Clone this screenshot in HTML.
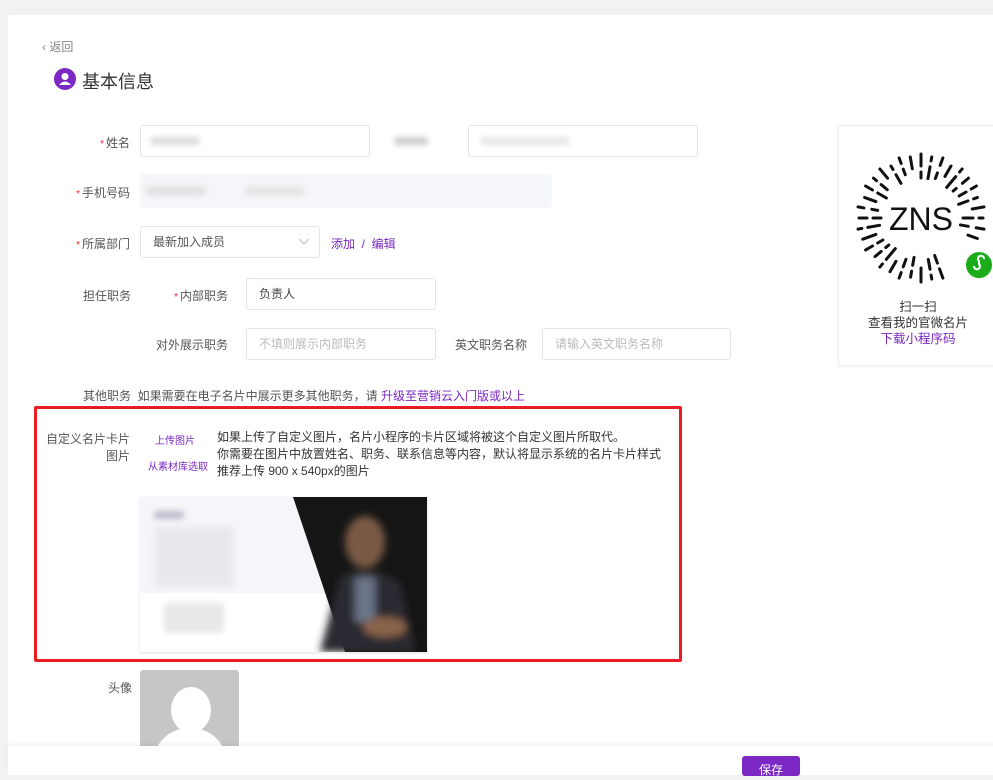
<!DOCTYPE html>
<html><head><meta charset="utf-8"><style>
*{margin:0;padding:0;box-sizing:border-box}
body{width:993px;height:768px;overflow:hidden;background:#f2f2f2;font-family:"Liberation Sans","Noto Sans CJK SC",sans-serif;font-size:12px;color:#333;position:relative}
.card{position:absolute;left:8px;top:15px;width:990px;height:760px;background:#fff;border-radius:3px}
.a{position:absolute;white-space:nowrap}
.lbl{position:absolute;text-align:right;color:#555;font-size:12px;white-space:nowrap}
.req{color:#f5222d;font-size:10px;margin-right:2px}
.inp{position:absolute;border:1px solid #e2e2e8;border-radius:3px;background:#fff;height:32px;line-height:30px;padding-left:12px;font-size:12px;color:#444}
.ph{color:#bbb}
.p{color:#7b28c4}
.blur{position:absolute;background:#ddd;filter:blur(3px);border-radius:3px}
</style></head><body>
<div class="card"></div>
<div class="a" style="left:42px;top:38px;color:#888;font-size:12px">‹ 返回</div>
<div class="a" style="left:54px;top:68px;width:22px;height:22px;border-radius:50%;background:#7b28c4"></div>
<svg class="a" style="left:54px;top:68px" width="22" height="22"><circle cx="11" cy="8.5" r="3.5" fill="#fff"/><path d="M5 17 Q11 10 17 17 Z" fill="#fff"/></svg>
<div class="a" style="left:82px;top:68px;font-size:18px;color:#333">基本信息</div>

<div class="lbl" style="left:60px;width:70px;top:134px"><span class="req">*</span>姓名</div>
<div class="inp" style="left:140px;top:125px;width:230px"></div>
<div class="blur" style="left:150px;top:137px;width:50px;height:8px"></div>
<div class="blur" style="left:394px;top:137px;width:34px;height:8px;background:#ccc"></div>
<div class="inp" style="left:468px;top:125px;width:230px"></div>
<div class="blur" style="left:480px;top:137px;width:90px;height:8px;background:#e6e6e6"></div>

<div class="lbl" style="left:60px;width:70px;top:184px"><span class="req">*</span>手机号码</div>
<div class="a" style="left:140px;top:174px;width:412px;height:34px;background:#f5f6f9;border-radius:3px;filter:blur(1px)"></div>
<div class="blur" style="left:146px;top:187px;width:60px;height:8px"></div>
<div class="blur" style="left:245px;top:187px;width:60px;height:8px;background:#e3e3e3"></div>

<div class="lbl" style="left:60px;width:70px;top:235px"><span class="req">*</span>所属部门</div>
<div class="inp" style="left:140px;top:226px;width:180px;color:#555">最新加入成员</div>
<svg class="a" style="left:298px;top:238px" width="12" height="8"><path d="M1 1 L6 6 L11 1" fill="none" stroke="#bbb"/></svg>
<div class="a p" style="left:331px;top:235px">添加 &nbsp;/ &nbsp;编辑</div>

<div class="a" style="left:83px;top:287px;color:#555">担任职务</div>
<div class="lbl" style="left:160px;width:68px;top:287px"><span class="req">*</span>内部职务</div>
<div class="inp" style="left:246px;top:278px;width:190px">负责人</div>
<div class="lbl" style="left:150px;width:78px;top:336px">对外展示职务</div>
<div class="inp ph" style="left:246px;top:328px;width:190px">不填则展示内部职务</div>
<div class="a" style="left:455px;top:336px;color:#555">英文职务名称</div>
<div class="inp ph" style="left:542px;top:328px;width:189px">请输入英文职务名称</div>

<div class="a" style="left:83px;top:387px;color:#555">其他职务 &nbsp;如果需要在电子名片中展示更多其他职务，请 <span class="p">升级至营销云入门版或以上</span></div>

<div class="a" style="left:34px;top:406px;width:648px;height:256px;border:3px solid #ec1c24;border-radius:2px"></div>
<div class="lbl" style="left:40px;width:90px;top:431px;line-height:17px">自定义名片卡片<br>图片</div>
<div class="a p" style="left:155px;top:432px;font-size:10px">上传图片</div>
<div class="a p" style="left:148px;top:458px;font-size:10px">从素材库选取</div>
<div class="a" style="left:217px;top:429px;line-height:17px;color:#333">如果上传了自定义图片，名片小程序的卡片区域将被这个自定义图片所取代。<br>你需要在图片中放置姓名、职务、联系信息等内容，默认将显示系统的名片卡片样式<br>推荐上传 900 x 540px的图片</div>

<div class="a" style="left:140px;top:497px;width:287px;height:155px;background:#fff;box-shadow:0 1px 3px rgba(0,0,0,.12);overflow:hidden">
 <div class="a" style="left:0;top:0;width:287px;height:96px;background:#f5f6f9"></div>
 <div class="blur" style="left:14px;top:14px;width:30px;height:8px;background:#bbc"></div>
 <div class="blur" style="left:14px;top:30px;width:80px;height:60px;background:#e8e9ee"></div>
 <div class="blur" style="left:24px;top:106px;width:60px;height:30px;background:#e8e8e8"></div>
 <svg class="a" style="left:0;top:0" width="287" height="155"><defs><filter id="b"><feGaussianBlur stdDeviation="4"/></filter></defs><polygon points="153,0 287,0 287,155 205,155" fill="#151515"/><g filter="url(#b)"><ellipse cx="225" cy="45" rx="20" ry="26" fill="#7a5a45"/><path d="M180 155 L200 80 Q225 65 260 85 L275 155Z" fill="#2a2c33"/><rect x="215" y="80" width="20" height="45" fill="#6a7488"/><ellipse cx="245" cy="130" rx="22" ry="10" fill="#8a6448"/></g></svg>
</div>

<div class="a" style="left:108px;top:679px;color:#555">头像</div>
<div class="a" style="left:140px;top:670px;width:99px;height:80px;background:#c6c6c6;border-radius:3px;overflow:hidden">
 <div class="a" style="left:31px;top:17px;width:40px;height:46px;border-radius:50%;background:#fff"></div>
 <div class="a" style="left:15px;top:58px;width:70px;height:60px;border-radius:50%;background:#fff"></div>
</div>

<div class="a" style="left:838px;top:125px;width:160px;height:241px;background:#fff;border:1px solid #eee;border-radius:3px;box-shadow:0 1px 3px rgba(0,0,0,.05)"></div>
<svg class="a" style="left:855px;top:148px" width="138" height="145">
<g stroke="#111" stroke-width="3" stroke-linecap="round">
<g transform="rotate(0 66 70)"><line x1="66" y1="6" x2="66" y2="18"/><line x1="66" y1="24" x2="66" y2="30"/></g>
<g transform="rotate(10 66 70)"><line x1="66" y1="8" x2="66" y2="12"/><line x1="66" y1="18" x2="66" y2="30"/></g>
<g transform="rotate(20 66 70)"><line x1="66" y1="6" x2="66" y2="14"/><line x1="66" y1="22" x2="66" y2="28"/></g>
<g transform="rotate(30 66 70)"><line x1="66" y1="10" x2="66" y2="22"/></g>
<g transform="rotate(40 66 70)"><line x1="66" y1="6" x2="66" y2="10"/><line x1="66" y1="16" x2="66" y2="30"/></g>
<g transform="rotate(50 66 70)"><line x1="66" y1="8" x2="66" y2="16"/><line x1="66" y1="24" x2="66" y2="28"/></g>
<g transform="rotate(60 66 70)"><line x1="66" y1="6" x2="66" y2="12"/><line x1="66" y1="18" x2="66" y2="26"/></g>
<g transform="rotate(70 66 70)"><line x1="66" y1="10" x2="66" y2="14"/><line x1="66" y1="20" x2="66" y2="30"/></g>
<g transform="rotate(80 66 70)"><line x1="66" y1="6" x2="66" y2="18"/></g>
<g transform="rotate(90 66 70)"><line x1="66" y1="8" x2="66" y2="12"/><line x1="66" y1="18" x2="66" y2="28"/></g>
<g transform="rotate(100 66 70)"><line x1="66" y1="6" x2="66" y2="14"/><line x1="66" y1="22" x2="66" y2="30"/></g>
<g transform="rotate(110 66 70)"><line x1="66" y1="10" x2="66" y2="20"/></g>
<g transform="rotate(160 66 70)"><line x1="66" y1="6" x2="66" y2="16"/><line x1="66" y1="22" x2="66" y2="30"/></g>
<g transform="rotate(170 66 70)"><line x1="66" y1="8" x2="66" y2="12"/><line x1="66" y1="18" x2="66" y2="28"/></g>
<g transform="rotate(180 66 70)"><line x1="66" y1="6" x2="66" y2="20"/></g>
<g transform="rotate(190 66 70)"><line x1="66" y1="10" x2="66" y2="16"/><line x1="66" y1="22" x2="66" y2="30"/></g>
<g transform="rotate(200 66 70)"><line x1="66" y1="6" x2="66" y2="12"/><line x1="66" y1="18" x2="66" y2="26"/></g>
<g transform="rotate(210 66 70)"><line x1="66" y1="8" x2="66" y2="20"/></g>
<g transform="rotate(220 66 70)"><line x1="66" y1="6" x2="66" y2="10"/><line x1="66" y1="16" x2="66" y2="30"/></g>
<g transform="rotate(230 66 70)"><line x1="66" y1="10" x2="66" y2="18"/><line x1="66" y1="24" x2="66" y2="28"/></g>
<g transform="rotate(240 66 70)"><line x1="66" y1="6" x2="66" y2="14"/><line x1="66" y1="20" x2="66" y2="26"/></g>
<g transform="rotate(250 66 70)"><line x1="66" y1="8" x2="66" y2="22"/></g>
<g transform="rotate(260 66 70)"><line x1="66" y1="6" x2="66" y2="10"/><line x1="66" y1="16" x2="66" y2="28"/></g>
<g transform="rotate(270 66 70)"><line x1="66" y1="8" x2="66" y2="16"/><line x1="66" y1="22" x2="66" y2="30"/></g>
<g transform="rotate(280 66 70)"><line x1="66" y1="6" x2="66" y2="12"/><line x1="66" y1="20" x2="66" y2="26"/></g>
<g transform="rotate(290 66 70)"><line x1="66" y1="10" x2="66" y2="22"/></g>
<g transform="rotate(300 66 70)"><line x1="66" y1="6" x2="66" y2="14"/><line x1="66" y1="20" x2="66" y2="30"/></g>
<g transform="rotate(310 66 70)"><line x1="66" y1="8" x2="66" y2="12"/><line x1="66" y1="18" x2="66" y2="26"/></g>
<g transform="rotate(320 66 70)"><line x1="66" y1="6" x2="66" y2="18"/></g>
<g transform="rotate(330 66 70)"><line x1="66" y1="10" x2="66" y2="14"/><line x1="66" y1="20" x2="66" y2="30"/></g>
<g transform="rotate(340 66 70)"><line x1="66" y1="6" x2="66" y2="12"/><line x1="66" y1="18" x2="66" y2="24"/></g>
<g transform="rotate(350 66 70)"><line x1="66" y1="8" x2="66" y2="20"/></g>
</g>
<text x="66" y="82" text-anchor="middle" font-family="Liberation Sans,sans-serif" font-size="32" fill="#111">ZNS</text>
<circle cx="124" cy="117" r="14" fill="#1aad19" stroke="#fff" stroke-width="2"/>
<path d="M119 118 a3 3 0 1 0 5 -2 l0 -3 a3 3 0 1 1 5 -2" fill="none" stroke="#fff" stroke-width="2"/>
</svg>
<div class="a" style="left:838px;top:299px;width:160px;text-align:center;line-height:16px;color:#333;font-size:12.5px">扫一扫<br>查看我的官微名片<br><span class="p">下载小程序码</span></div>

<div class="a" style="left:8px;top:746px;width:990px;height:22px;background:#fff;box-shadow:0 -2px 4px rgba(0,0,0,.05)"></div>
<div class="a" style="left:742px;top:756px;width:58px;height:20px;background:#7b28c4;border-radius:3px;color:#fff;text-align:center;font-size:12px;line-height:20px;padding-top:4px">保存</div>
</body></html>
